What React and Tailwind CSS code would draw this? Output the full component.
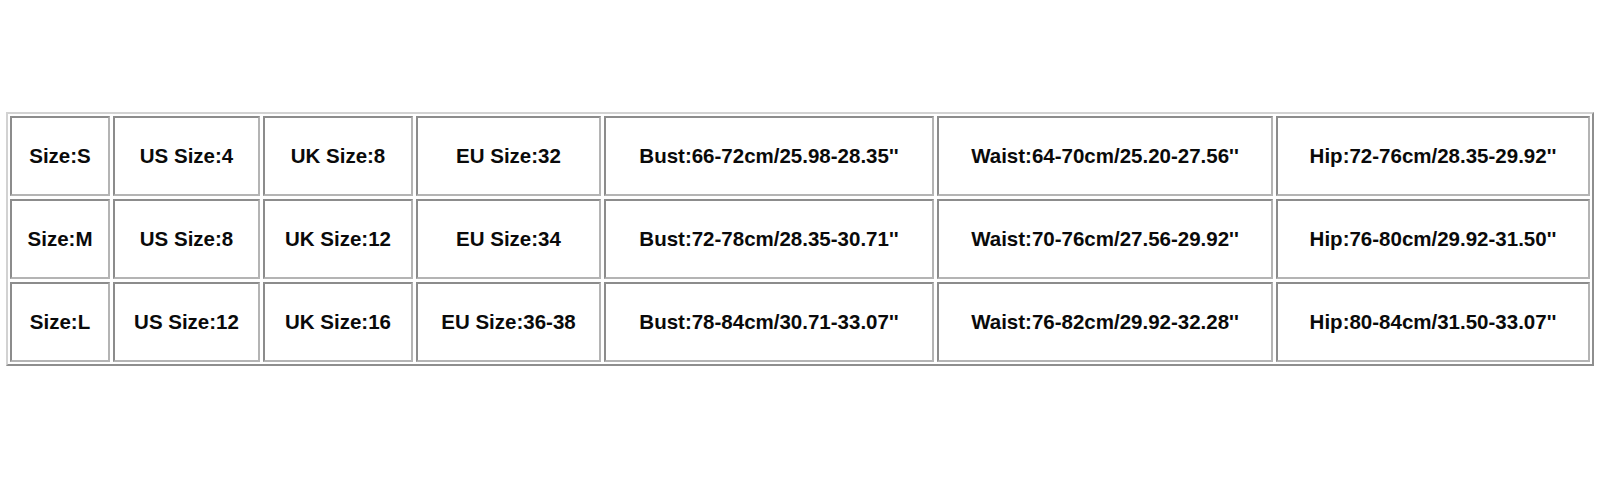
import React from 'react';

const rows = [
    ['Size:S', 'US Size:4', 'UK Size:8', 'EU Size:32', "Bust:66-72cm/25.98-28.35''", "Waist:64-70cm/25.20-27.56''", "Hip:72-76cm/28.35-29.92''"],
    ['Size:M', 'US Size:8', 'UK Size:12', 'EU Size:34', "Bust:72-78cm/28.35-30.71''", "Waist:70-76cm/27.56-29.92''", "Hip:76-80cm/29.92-31.50''"],
    ['Size:L', 'US Size:12', 'UK Size:16', 'EU Size:36-38', "Bust:78-84cm/30.71-33.07''", "Waist:76-82cm/29.92-32.28''", "Hip:80-84cm/31.50-33.07''"],
];

const App = () => {
    return (
        <div className="w-[1600px] h-[500px] bg-white overflow-hidden font-['Liberation_Sans',Arial,sans-serif]">
            <div className="ml-[6px] mt-[112px] w-[1588px] border-2 border-t-[#d2d2d2] border-l-[#d2d2d2] border-r-[#8e8e8e] border-b-[#8e8e8e] p-[2px]">
                <div className="grid grid-cols-[100px_147px_150px_185px_330px_336px_314px] auto-rows-[80px] gap-[3px]">
                    {rows.flatMap((row, r) =>
                        row.map((cell, c) => (
                            <div
                                key={`${r}-${c}`}
                                className="flex items-center justify-center border-2 border-t-[#8c8c8c] border-l-[#8c8c8c] border-r-[#b4b4b4] border-b-[#b4b4b4] text-[20.5px] font-bold text-[#0a0a0a] whitespace-nowrap"
                            >
                                {cell}
                            </div>
                        ))
                    )}
                </div>
            </div>
        </div>
    );
};

export default App;
